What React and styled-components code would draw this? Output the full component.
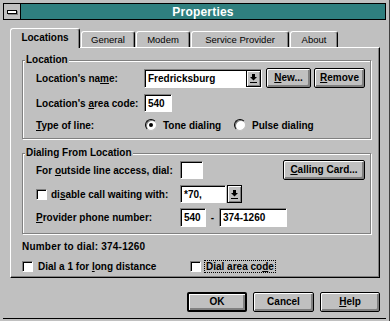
import React from "react";
import styled, { createGlobalStyle } from "styled-components";

const GRAY = "#c0c0c0";
const DARK = "#808080";
const TEAL = "#2f7f7f";
const FONT = `"Liberation Sans", Arial, sans-serif`;

const Global = createGlobalStyle`
  html, body { margin: 0; padding: 0; background: ${GRAY}; }
  body { font-family: ${FONT}; }
  * { box-sizing: border-box; }
`;

const Window = styled.div`
  width: 390px;
  height: 321px;
  background: ${GRAY};
  padding: 3px 3px 0 3px;
  border-right: 1px solid #404040;
  display: flex;
  flex-direction: column;
  font: bold 10px ${FONT};
  color: #000;
`;

const TitleBar = styled.div`
  display: flex;
  height: 17px;
  flex: none;
`;

const SysMenu = styled.div`
  width: 18px;
  height: 17px;
  border: 1px solid #000;
  background: ${GRAY};
  display: flex;
  align-items: center;
  justify-content: center;
`;

const SysBar = styled.div`
  width: 10px;
  height: 4px;
  background: #fff;
  border: 1px solid #000;
  box-shadow: 1px 1px 0 ${DARK};
`;

const Caption = styled.div`
  flex: 1;
  height: 17px;
  background: ${TEAL};
  color: #fff;
  font: bold 12px ${FONT};
  display: flex;
  align-items: center;
  justify-content: center;
  border: 1px solid #000;
  border-left: none;
  letter-spacing: 0.2px;
`;

const Client = styled.div`
  flex: 1;
  display: flex;
  flex-direction: column;
  padding: 8px 0 0 7px;
  border-bottom: 1px solid #000;
  margin-bottom: 2px;
`;

const TabStrip = styled.div`
  display: flex;
  align-items: flex-end;
  height: 20px;
  margin-bottom: -1px;
  position: relative;
  z-index: 1;
`;

const Tab = styled.div`
  width: ${(p) => p.w}px;
  height: ${(p) => (p.active ? 20 : 16)}px;
  margin-left: ${(p) => p.ml || 0}px;
  margin-bottom: ${(p) => (p.active ? 0 : 1)}px;
  background: ${GRAY};
  border-top: 1px solid #fff;
  border-left: 1px solid #fff;
  border-right: 1px solid #000;
  border-radius: 3px 3px 0 0;
  box-shadow: inset -1px 0 0 ${DARK};
  display: flex;
  align-items: center;
  justify-content: center;
  padding-bottom: ${(p) => (p.active ? 2 : 0)}px;
  font: ${(p) => (p.active ? "bold 10px" : "9.5px")} ${FONT};
`;

const Page = styled.div`
  width: 370px;
  height: 231px;
  border: 1px solid;
  border-color: #fff #000 #000 #fff;
  box-shadow: inset -1px -1px 0 ${DARK};
  padding: 12px 0 0 11px;
  display: flex;
  flex-direction: column;
`;

const Group = styled.div`
  position: relative;
  width: 349px;
  margin-top: ${(p) => p.mt || 0}px;
  padding: ${(p) => p.pt}px 0 ${(p) => p.pb}px 13px;
  border: 1px solid ${DARK};
  box-shadow: 1px 1px 0 #fff, inset 1px 1px 0 #fff;
  display: flex;
  flex-direction: column;
  gap: ${(p) => p.gap}px;
`;

const GroupLabel = styled.span`
  position: absolute;
  top: -7px;
  left: 2px;
  padding: 0 1px;
  line-height: 12px;
  background: ${GRAY};
`;

const Row = styled.div`
  display: flex;
  align-items: center;
  height: ${(p) => p.h}px;
`;

const Label = styled.span`
  width: ${(p) => p.w}px;
  flex: none;
  white-space: nowrap;
`;

const Text = styled.span`
  white-space: nowrap;
`;

const U = styled.span`
  text-decoration: underline;
  text-underline-offset: 1px;
`;

const Field = styled.div`
  width: ${(p) => p.w}px;
  height: ${(p) => p.h || 18}px;
  margin-left: ${(p) => p.ml || 0}px;
  background: #fff;
  border: 1px solid;
  border-color: ${DARK} #fff #fff ${DARK};
  box-shadow: inset 1px 1px 0 #000;
  display: flex;
  align-items: center;
  padding-left: 3px;
  white-space: nowrap;
  flex: none;
`;

const ComboText = styled.span`
  flex: 1;
`;

const DropBtn = styled.div`
  width: 15px;
  height: ${(p) => p.h || 17}px;
  margin-left: ${(p) => p.ml || 0}px;
  background: ${GRAY};
  border: 1px solid #000;
  box-shadow: inset 1px 1px 0 #fff, inset -1px -1px 0 ${DARK};
  display: flex;
  align-items: center;
  justify-content: center;
  flex: none;
`;

const Btn = styled.div`
  width: ${(p) => p.w}px;
  height: ${(p) => p.h || 20}px;
  margin-left: ${(p) => p.ml || 0}px;
  background: ${GRAY};
  border: ${(p) => (p.def ? 2 : 1)}px solid #000;
  border-radius: 2px;
  box-shadow: inset 1px 1px 0 #fff, inset -2px -2px 0 ${DARK};
  display: flex;
  align-items: center;
  justify-content: center;
  padding-bottom: 1px;
  flex: none;
  white-space: nowrap;
`;

const Option = styled.label`
  display: flex;
  align-items: center;
  gap: 6px;
  width: ${(p) => p.w}px;
  flex: none;
  white-space: nowrap;
`;

const Radio = styled.span`
  width: 12px;
  height: 12px;
  border-radius: 50%;
  background: #fff;
  border: 1px solid;
  border-color: #000 ${GRAY} ${GRAY} #000;
  box-shadow: inset 1px 1px 0 ${DARK};
  display: flex;
  align-items: center;
  justify-content: center;
  flex: none;
  &::after {
    content: "";
    width: 4px;
    height: 4px;
    border-radius: 50%;
    background: #000;
    display: ${(p) => (p.checked ? "block" : "none")};
  }
`;

const Check = styled.span`
  width: 11px;
  height: 11px;
  background: #fff;
  border: 1px solid;
  border-color: ${DARK} #fff #fff ${DARK};
  box-shadow: inset 1px 1px 0 #000;
  flex: none;
`;

const CheckOption = styled.label`
  display: flex;
  align-items: center;
  gap: ${(p) => p.gap || 5}px;
  width: ${(p) => p.w}px;
  flex: none;
  white-space: nowrap;
`;

const Focus = styled.span`
  border: 1px dotted #000;
  padding: 0 1px;
  line-height: 11px;
`;

const Dash = styled.span`
  width: 13px;
  text-align: center;
  flex: none;
`;

const InfoLine = styled.div`
  margin-top: 7px;
  line-height: 12px;
  letter-spacing: 0.2px;
`;

const CheckRow = styled.div`
  display: flex;
  align-items: center;
  height: 13px;
  margin-top: 7px;
`;

const ButtonRow = styled.div`
  width: 370px;
  display: flex;
  justify-content: flex-end;
  gap: 6px;
  margin-top: 14px;
`;

const DownArrow = () => (
  <svg width="7" height="9" viewBox="0 0 7 9">
    <rect x="2" y="0" width="3" height="3" fill="#000" />
    <polygon points="0,3 7,3 3.5,6.5" fill="#000" />
    <rect x="0" y="8" width="7" height="1" fill="#000" />
  </svg>
);

export default function App() {
  return (
    <>
      <Global />
      <Window>
        <TitleBar>
          <SysMenu>
            <SysBar />
          </SysMenu>
          <Caption>Properties</Caption>
        </TitleBar>
        <Client>
          <TabStrip>
            <Tab active w={70}>Locations</Tab>
            <Tab w={54} ml={1}>General</Tab>
            <Tab w={54} ml={1}>Modem</Tab>
            <Tab w={98} ml={1}>Service Provider</Tab>
            <Tab w={48} ml={1}>About</Tab>
          </TabStrip>
          <Page>
            <Group pt={7} pb={6} gap={6}>
              <GroupLabel>Location</GroupLabel>
              <Row h={20}>
                <Label w={108}>
                  Location's na<U>m</U>e:
                </Label>
                <Field w={118} h={19}>
                  <ComboText>Fredricksburg</ComboText>
                  <DropBtn h={17}>
                    <DownArrow />
                  </DropBtn>
                </Field>
                <Btn w={45} ml={4}>
                  <Text>
                    <U>N</U>ew...
                  </Text>
                </Btn>
                <Btn w={51} ml={3}>
                  <Text>
                    <U>R</U>emove
                  </Text>
                </Btn>
              </Row>
              <Row h={18}>
                <Label w={108}>
                  Location's <U>a</U>rea code:
                </Label>
                <Field w={28}>540</Field>
              </Row>
              <Row h={14}>
                <Label w={109}>
                  <U>T</U>ype of line:
                </Label>
                <Option w={89}>
                  <Radio checked />
                  <Text>Tone dialing</Text>
                </Option>
                <Option w={100}>
                  <Radio />
                  <Text>Pulse dialing</Text>
                </Option>
              </Row>
            </Group>

            <Group mt={14} pt={6} pb={6} gap={5}>
              <GroupLabel>Dialing From Location</GroupLabel>
              <Row h={20}>
                <Label w={144}>
                  For <U>o</U>utside line access, dial:
                </Label>
                <Field w={23} />
                <Btn w={82} ml={80}>
                  <Text>
                    <U>C</U>alling Card...
                  </Text>
                </Btn>
              </Row>
              <Row h={18}>
                <CheckOption w={144} gap={4}>
                  <Check />
                  <Text>
                    di<U>s</U>able call waiting with:
                  </Text>
                </CheckOption>
                <Field w={46}>*70,</Field>
                <DropBtn h={18} ml={1}>
                  <DownArrow />
                </DropBtn>
              </Row>
              <Row h={19}>
                <Label w={144}>
                  <U>P</U>rovider phone number:
                </Label>
                <Field w={26} h={19}>540</Field>
                <Dash>-</Dash>
                <Field w={68} h={19}>374-1260</Field>
              </Row>
            </Group>

            <InfoLine>Number to dial: 374-1260</InfoLine>
            <CheckRow>
              <CheckOption w={168}>
                <Check />
                <Text>
                  Dial a 1 for <U>l</U>ong distance
                </Text>
              </CheckOption>
              <CheckOption w={120} gap={3}>
                <Check />
                <Focus>
                  Dial area co<U>d</U>e
                </Focus>
              </CheckOption>
            </CheckRow>
          </Page>
          <ButtonRow>
            <Btn w={60} def>OK</Btn>
            <Btn w={61}>Cancel</Btn>
            <Btn w={60}>
              <Text>
                <U>H</U>elp
              </Text>
            </Btn>
          </ButtonRow>
        </Client>
      </Window>
    </>
  );
}
